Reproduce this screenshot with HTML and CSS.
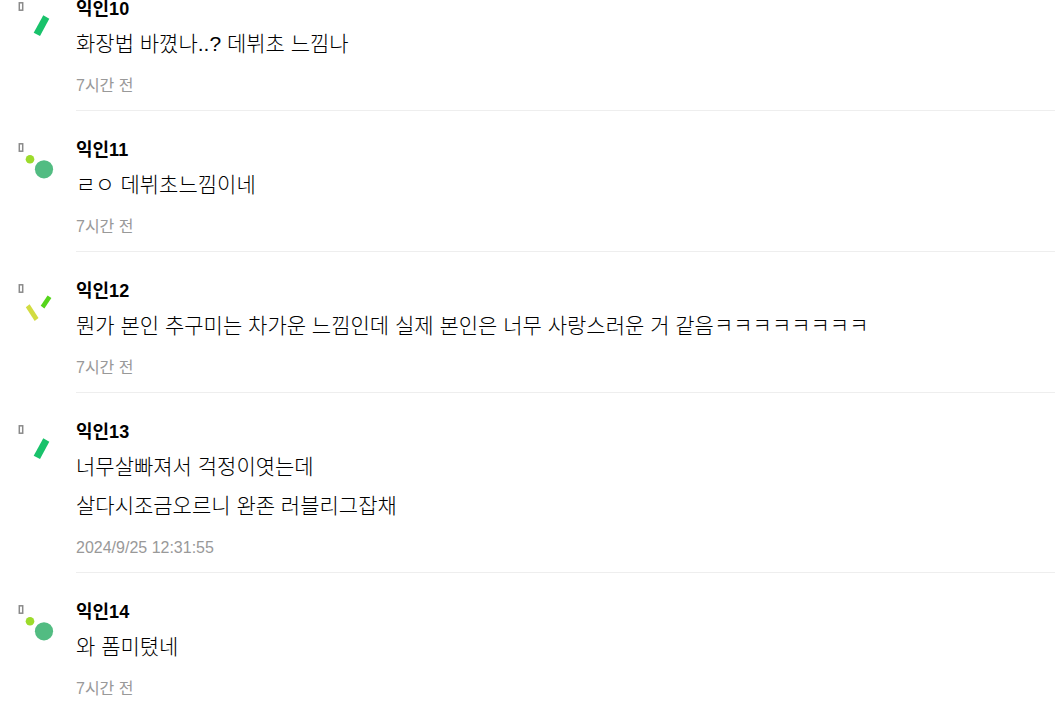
FILE: index.html
```html
<!DOCTYPE html>
<html lang="ko">
<head>
  <meta charset="UTF-8" />
  <meta name="viewport" content="width=device-width, initial-scale=1" />
  <title>댓글</title>
  <link rel="stylesheet" href="styles.css">
</head>
<body>
  <ul class="comments">
    <li class="comment">
      <svg class="avatar" viewBox="0 0 44 46" aria-hidden="true">
        <rect class="glyph" x="3.3" y="7.8" width="3.4" height="7.4" />
        <polygon fill="#19c26b" points="27.3,20.3 33.3,23.7 24,41 17.7,37.7" />
      </svg>
      <div class="content">
        <strong class="name">익인10</strong>
        <p class="text">화장법 바꼈나..? 데뷔초 느낌나</p>
        <time class="time">7시간 전</time>
      </div>
    </li>

    <li class="comment">
      <svg class="avatar" viewBox="0 0 44 46" aria-hidden="true">
        <rect class="glyph" x="3.3" y="7.8" width="3.4" height="7.4" />
        <circle fill="#9cdb2b" cx="14" cy="23.3" r="4.3" />
        <circle fill="#52bc82" cx="28" cy="33.3" r="9.1" />
      </svg>
      <div class="content">
        <strong class="name">익인11</strong>
        <p class="text">ㄹㅇ 데뷔초느낌이네</p>
        <time class="time">7시간 전</time>
      </div>
    </li>

    <li class="comment">
      <svg class="avatar" viewBox="0 0 44 46" aria-hidden="true">
        <rect class="glyph" x="3.3" y="7.8" width="3.4" height="7.4" />
        <polygon fill="#d2dc41" points="13.6,27.3 22.5,41 18.7,43.9 9.8,30.3" />
        <polygon fill="#55d51b" points="31.6,18.4 35.4,21 28.4,31.4 24.7,28.8" />
      </svg>
      <div class="content">
        <strong class="name">익인12</strong>
        <p class="text">뭔가 본인 추구미는 차가운 느낌인데 실제 본인은 너무 사랑스러운 거 같음ㅋㅋㅋㅋㅋㅋㅋㅋ</p>
        <time class="time">7시간 전</time>
      </div>
    </li>

    <li class="comment">
      <svg class="avatar" viewBox="0 0 44 46" aria-hidden="true">
        <rect class="glyph" x="3.3" y="7.8" width="3.4" height="7.4" />
        <polygon fill="#19c26b" points="27.3,20.3 33.3,23.7 24,41 17.7,37.7" />
      </svg>
      <div class="content">
        <strong class="name">익인13</strong>
        <p class="text">너무살빠져서 걱정이엿는데<br>살다시조금오르니 완존 러블리그잡채</p>
        <time class="time" datetime="2024-09-25T12:31:55">2024/9/25 12:31:55</time>
      </div>
    </li>

    <li class="comment">
      <svg class="avatar" viewBox="0 0 44 46" aria-hidden="true">
        <rect class="glyph" x="3.3" y="7.8" width="3.4" height="7.4" />
        <circle fill="#9cdb2b" cx="14" cy="23.3" r="4.3" />
        <circle fill="#52bc82" cx="28" cy="33.3" r="9.1" />
      </svg>
      <div class="content">
        <strong class="name">익인14</strong>
        <p class="text">와 폼미텼네</p>
        <time class="time">7시간 전</time>
      </div>
    </li>
  </ul>
</body>
</html>
```
FILE: styles.css
```css
* {
  box-sizing: border-box;
}

body {
  margin: 0;
  height: 100vh;
  overflow: hidden;
  font-family: 'Liberation Sans', 'Noto Sans CJK KR', sans-serif;
  background-color: #fff;
  color: #000;
}

.comments {
  list-style: none;
  margin: -30px 0 0;
  padding: 0;
}

.comment {
  display: flex;
  gap: 16px;
  padding-left: 16px;
}

.avatar {
  flex: none;
  width: 44px;
  height: 46px;
  margin-top: 25px;
}

.glyph {
  fill: #fff;
  stroke: #8a8a8a;
  stroke-width: 1.5;
}

.content {
  flex: 1;
  padding: 25px 0 9px;
  border-bottom: 1px solid #eee;
}

.name {
  display: block;
  font-size: 18px;
  line-height: 29px;
}

.text {
  margin: 0 0 8px;
  font-size: 21px;
  font-weight: 300;
  line-height: 39px;
}

.time {
  display: block;
  font-size: 16px;
  line-height: 30px;
  color: #999;
}
```
